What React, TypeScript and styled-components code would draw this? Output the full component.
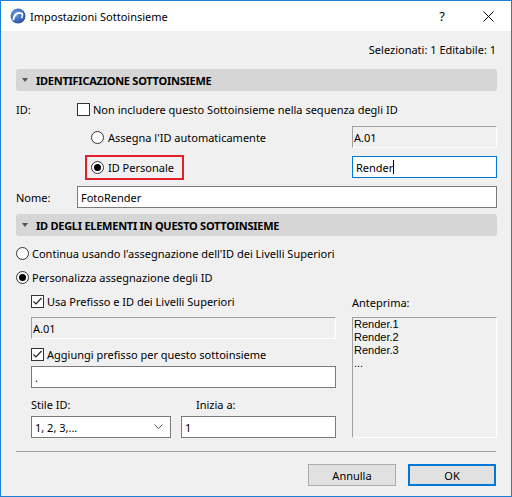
import React from 'react'
import styled, { createGlobalStyle } from 'styled-components'

const GlobalStyle = createGlobalStyle`
  html, body {
    margin: 0;
    padding: 0;
    background: #ffffff;
  }
  * {
    box-sizing: border-box;
  }
`

const FONT = `'Noto Sans', 'Open Sans', sans-serif`

const Window = styled.div`
  width: 512px;
  height: 497px;
  border: 1px solid #1c7fd4;
  background: #f0f0f0;
  font-family: ${FONT};
  font-size: 11px;
  color: #000;
  display: flex;
  flex-direction: column;
  overflow: hidden;
`

const TitleBar = styled.div`
  height: 30px;
  background: #ffffff;
  display: flex;
  align-items: center;
  padding-left: 9px;
  flex-shrink: 0;
`

const TitleText = styled.span`
  font-size: 11px;
  margin-left: 4px;
  flex: 1;
`

const TitleButton = styled.div<{ $w: number }>`
  width: ${(p) => p.$w}px;
  height: 30px;
  display: flex;
  align-items: center;
  justify-content: center;
  font-size: 13px;
`

const Body = styled.div`
  flex: 1;
  padding: 0 14px 0 15px;
  display: flex;
  flex-direction: column;
`

const Selection = styled.div`
  margin-top: 11px;
  height: 16px;
  line-height: 16px;
  text-align: right;
  padding-right: 1px;
`

const SectionHeader = styled.div<{ $mt: number }>`
  margin-top: ${(p) => p.$mt}px;
  height: 22px;
  background: #d6d6d6;
  border-radius: 3px;
  display: flex;
  align-items: center;
  padding-left: 6px;
  font-weight: 700;
  font-size: 11px;
  letter-spacing: -0.25px;
  text-transform: uppercase;
  flex-shrink: 0;
`

const Caret = styled.span`
  width: 0;
  height: 0;
  border-left: 3.5px solid transparent;
  border-right: 3.5px solid transparent;
  border-top: 4px solid #555;
  margin-right: 8px;
`

const Row = styled.div<{ $mt: number; $h?: number; $indent?: number }>`
  margin-top: ${(p) => p.$mt}px;
  height: ${(p) => p.$h ?? 16}px;
  padding-left: ${(p) => p.$indent ?? 0}px;
  display: flex;
  align-items: center;
  flex-shrink: 0;
`

const Label = styled.span<{ $w?: number; $gap?: number }>`
  width: ${(p) => (p.$w ? `${p.$w}px` : 'auto')};
  margin-left: ${(p) => p.$gap ?? 0}px;
  flex-shrink: 0;
  white-space: nowrap;
`

const Option = styled.label<{ $boxed?: boolean }>`
  display: flex;
  align-items: center;
  gap: 4px;
  white-space: nowrap;
  height: 25px;
  padding: 0 8px 0 4px;
  border: 2px solid ${(p) => (p.$boxed ? '#e0202a' : 'transparent')};
`

const Check = styled.span`
  width: 13px;
  height: 13px;
  border: 1px solid #333;
  background: #fff;
  flex-shrink: 0;
  display: flex;
  align-items: center;
  justify-content: center;
`

const Radio = styled.span<{ $on?: boolean }>`
  width: 13px;
  height: 13px;
  border: 1px solid #333;
  border-radius: 50%;
  background: #fff;
  flex-shrink: 0;
  display: flex;
  align-items: center;
  justify-content: center;

  &::after {
    content: '';
    width: 7px;
    height: 7px;
    border-radius: 50%;
    background: #000;
    display: ${(p) => (p.$on ? 'block' : 'none')};
  }
`

const Field = styled.div<{ $w?: number; $variant?: 'plain' | 'disabled' | 'focus' }>`
  width: ${(p) => (p.$w ? `${p.$w}px` : 'auto')};
  flex: ${(p) => (p.$w ? '0 0 auto' : '1')};
  height: 22px;
  display: flex;
  align-items: center;
  padding: 0 3px;
  background: ${(p) => (p.$variant === 'disabled' ? '#f0f0f0' : '#fff')};
  border: 1px solid
    ${(p) => (p.$variant === 'focus' ? '#0078d7' : p.$variant === 'disabled' ? '#a0a0a0' : '#7a7a7a')};
  ${(p) =>
    p.$variant === 'disabled' &&
    `border-right-color: #fff; border-bottom-color: #fff; padding-left: 1px;`}
`

const TextCursor = styled.span`
  display: inline-block;
  width: 1px;
  height: 14px;
  background: #000;
`

const Spacer = styled.span`
  flex: 1;
`

const Split = styled.div`
  display: grid;
  grid-template-columns: 320px 145px;
  column-gap: 16px;
  flex-shrink: 0;
`

const Col = styled.div`
  display: flex;
  flex-direction: column;
`

const Preview = styled.div`
  margin-top: 7px;
  height: 121px;
  background: #f0f0f0;
  border: 1px solid #a0a0a0;
  border-right-color: #fff;
  border-bottom-color: #fff;
  padding: 0 1px;
  font-family: 'Liberation Sans', Arial, sans-serif;
  font-size: 11px;
  line-height: 13px;
`

const FieldRow = styled.div<{ $mt: number }>`
  margin-top: ${(p) => p.$mt}px;
  padding-left: 15px;
  display: flex;
  gap: 10px;
`

const LabelRow = styled.div`
  margin-top: 8px;
  height: 16px;
  padding-left: 15px;
  display: flex;
  align-items: center;
`

const Select = styled.div`
  width: 140px;
  height: 22px;
  background: #fff;
  border: 1px solid #7a7a7a;
  display: flex;
  align-items: center;
  padding: 0 7px 0 3px;
  justify-content: space-between;
`

const Separator = styled.div`
  margin-top: 13px;
  height: 1px;
  background: #a0a0a0;
  margin-right: 1px;
`

const Buttons = styled.div`
  margin-top: 12px;
  display: flex;
  justify-content: flex-end;
  gap: 12px;
  padding-right: 1px;
`

const Button = styled.div<{ $primary?: boolean }>`
  width: 88px;
  height: 22px;
  background: #e1e1e1;
  border: ${(p) => (p.$primary ? '2px solid #0078d7' : '1px solid #adadad')};
  display: flex;
  align-items: center;
  justify-content: center;
`

const CheckMark = () => (
  <svg width="11" height="11" viewBox="0 0 11 11">
    <polyline points="1.5,5.5 4,8 9.5,2" fill="none" stroke="#222" strokeWidth="1.2" />
  </svg>
)

const AppIcon = () => (
  <svg width="16" height="16" viewBox="0 0 17 17">
    <defs>
      <radialGradient id="g" cx="0.35" cy="0.35" r="0.75">
        <stop offset="0" stopColor="#6f9be0" />
        <stop offset="1" stopColor="#1d4a9e" />
      </radialGradient>
    </defs>
    <circle cx="8.5" cy="8.5" r="8" fill="url(#g)" />
    <path d="M3.5 13 C4.5 6 9 3.5 13.5 6.5" fill="none" stroke="#fff" strokeWidth="2" />
    <path d="M13.5 6.5 L12.5 11" fill="none" stroke="#fff" strokeWidth="1.6" />
  </svg>
)

const CloseIcon = () => (
  <svg width="11" height="11" viewBox="0 0 11 11">
    <path d="M0.5 0.5 L10.5 10.5 M10.5 0.5 L0.5 10.5" stroke="#000" strokeWidth="1" />
  </svg>
)

const Chevron = () => (
  <svg width="9" height="6" viewBox="0 0 9 6">
    <polyline points="0.5,0.5 4.5,4.5 8.5,0.5" fill="none" stroke="#555" strokeWidth="1" />
  </svg>
)

const App: React.FC = () => {
  return (
    <>
      <GlobalStyle />
      <Window>
        <TitleBar>
          <AppIcon />
          <TitleText>Impostazioni Sottoinsieme</TitleText>
          <TitleButton $w={46}>?</TitleButton>
          <TitleButton $w={46}>
            <CloseIcon />
          </TitleButton>
        </TitleBar>
        <Body>
          <Selection>Selezionati: 1 Editabile: 1</Selection>

          <SectionHeader $mt={11}>
            <Caret />
            Identificazione sottoinsieme
          </SectionHeader>

          <Row $mt={10}>
            <Label $w={61}>ID:</Label>
            <Check />
            <Label $gap={3}>Non includere questo Sottoinsieme nella sequenza degli ID</Label>
          </Row>

          <Row $mt={9} $h={22} $indent={69}>
            <Option>
              <Radio />
              Assegna l'ID automaticamente
            </Option>
            <Spacer />
            <Field $w={145} $variant="disabled">A.01</Field>
          </Row>

          <Row $mt={8} $h={22} $indent={69}>
            <Option $boxed>
              <Radio $on />
              ID Personale
            </Option>
            <Spacer />
            <Field $w={145} $variant="focus">
              Render
              <TextCursor />
            </Field>
          </Row>

          <Row $mt={8} $h={22}>
            <Label $w={61}>Nome:</Label>
            <Field>FotoRender</Field>
          </Row>

          <SectionHeader $mt={6}>
            <Caret />
            ID degli elementi in questo sottoinsieme
          </SectionHeader>

          <Row $mt={9}>
            <Radio />
            <Label $gap={3}>Continua usando l'assegnazione dell'ID dei Livelli Superiori</Label>
          </Row>

          <Row $mt={8}>
            <Radio $on />
            <Label $gap={3}>Personalizza assegnazione degli ID</Label>
          </Row>

          <Split>
            <Col>
              <Row $mt={8} $indent={15}>
                <Check>
                  <CheckMark />
                </Check>
                <Label $gap={3}>Usa Prefisso e ID dei Livelli Superiori</Label>
              </Row>
              <FieldRow $mt={8}>
                <Field $variant="disabled">A.01</Field>
              </FieldRow>
              <Row $mt={7} $indent={15}>
                <Check>
                  <CheckMark />
                </Check>
                <Label $gap={3}>Aggiungi prefisso per questo sottoinsieme</Label>
              </Row>
              <FieldRow $mt={4}>
                <Field>.</Field>
              </FieldRow>
              <LabelRow>
                <Label $w={165}>Stile ID:</Label>
                <Label>Inizia a:</Label>
              </LabelRow>
              <FieldRow $mt={4}>
                <Select>
                  <span>1, 2, 3,...</span>
                  <Chevron />
                </Select>
                <Field>1</Field>
              </FieldRow>
            </Col>
            <Col>
              <Row $mt={9}>Anteprima:</Row>
              <Preview>
                <div>Render.1</div>
                <div>Render.2</div>
                <div>Render.3</div>
                <div>...</div>
              </Preview>
            </Col>
          </Split>

          <Separator />

          <Buttons>
            <Button>Annulla</Button>
            <Button $primary>OK</Button>
          </Buttons>
        </Body>
      </Window>
    </>
  )
}

export default App
